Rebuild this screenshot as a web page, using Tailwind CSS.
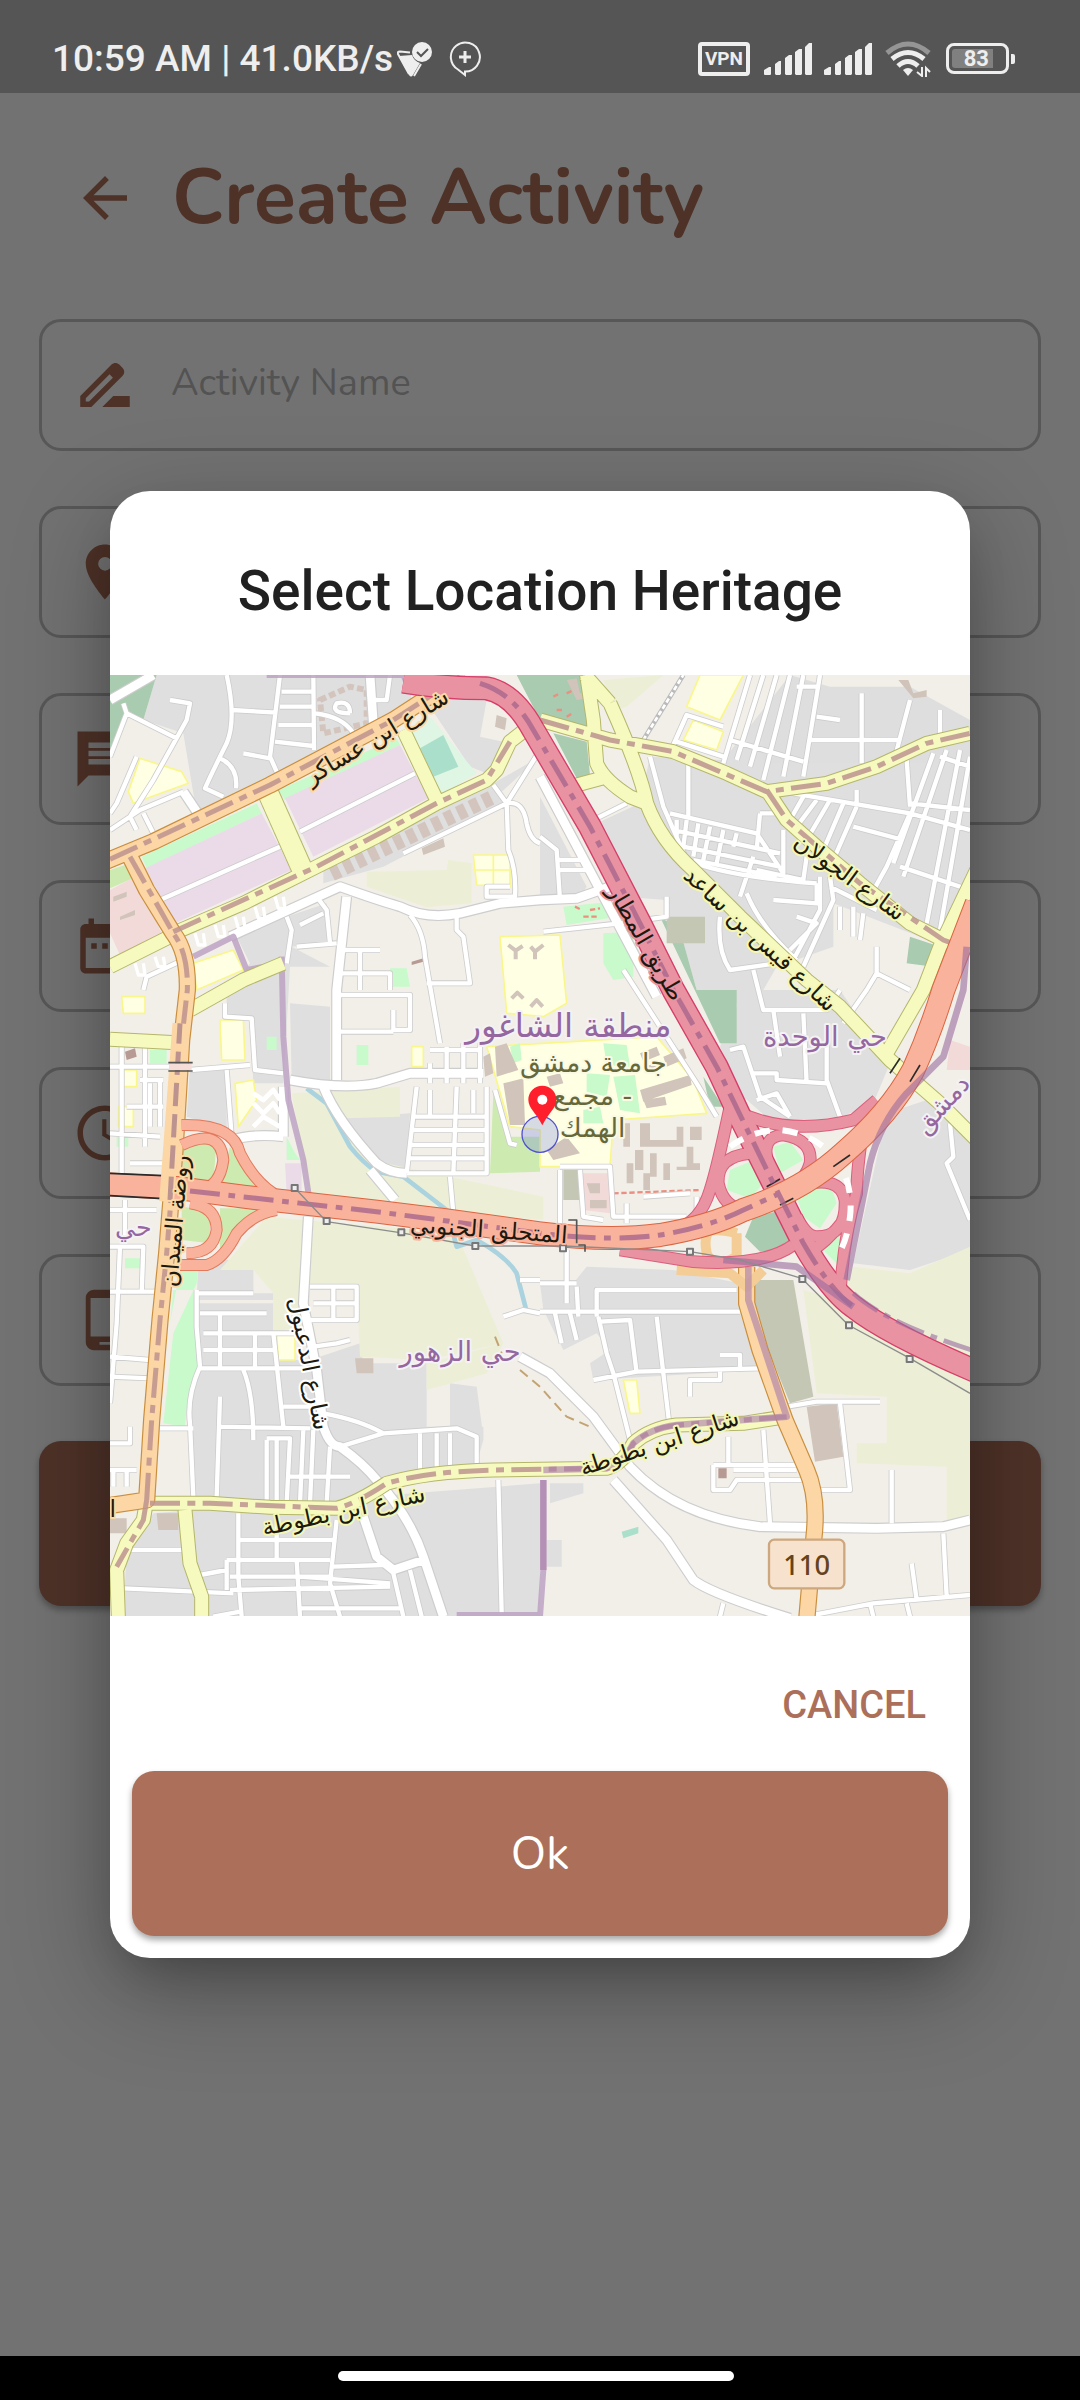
<!DOCTYPE html>
<html lang="en">
<head>
<meta charset="utf-8">
<meta name="viewport" content="width=device-width, initial-scale=1">
<title>Create Activity</title>
<script src="https://cdn.jsdelivr.net/npm/@tailwindcss/browser@4"></script>
</head>
<body class="flex min-h-screen flex-col bg-[#727272] font-['Nunito','Lato',sans-serif] text-[#4e3228]">

<!-- Status bar -->
<header class="flex h-[93px] items-center justify-between bg-[#555] pt-6 pr-[65px] pl-[52px] text-[#eee]">
  <div class="flex items-center">
    <span class="font-['Roboto',sans-serif] text-[37px] leading-[44px] font-medium whitespace-nowrap">10:59 AM | 41.0KB/s</span>
    <svg class="ml-1 h-[36px] w-[36px]" viewBox="0 0 36 36" fill="none" aria-hidden="true">
      <path d="M2 15L15 14Q17 20 23 22L16 34Q14 37 12 34Z" fill="#eee"/>
      <path d="M13 11.500L3 10.500Q0 10.500 1 13L12 33M24 23L17 35" stroke="#eee" stroke-width="2"/>
      <circle cx="25" cy="11" r="10" fill="#eee"/>
      <path d="M20 11l4 4 7-7" stroke="#555" stroke-width="2"/>
    </svg>
    <svg class="ml-4 h-[36px] w-[32px]" viewBox="0 0 32 36" fill="none" stroke="#eee" stroke-width="2" aria-hidden="true">
      <path d="M16 30.500A14.500 14.500 0 1 0 9 28.500L16 34Z"/>
      <path d="M10 16H22M16 10V22" stroke-width="3"/>
    </svg>
  </div>
  <div class="flex items-center">
    <span class="flex h-[34px] w-[52px] items-center justify-center rounded-[4px] border-4 border-[#eee] font-['Roboto',sans-serif] text-[19px] leading-5 font-bold">VPN</span>
    <svg class="ml-[14px] h-[32px] w-[48px]" viewBox="0 0 48 32" fill="#eee" aria-hidden="true"><path id="bars" d="M0 31V27L5 24H7V31Q7 32 6 32H1Q0 32 0 31ZM11 31V21L15 18H17V31L16 32H12ZM21 31V15L25 12H28V31L27 32H22ZM31 31V9L35 6H38V31L37 32H32ZM41 31V4L45 0H48V31L47 32H42Z"/></svg>
    <svg class="ml-[12px] h-[32px] w-[48px]" viewBox="0 0 48 32" fill="#eee" aria-hidden="true"><use href="#bars"/></svg>
    <svg class="ml-[13px] h-[36px] w-[46px]" viewBox="0 0 46 36" fill="none" stroke-width="5" aria-hidden="true">
      <path d="M2 12Q23-6 44 12" stroke="#959595"/>
      <path d="M7 18Q23 5 39 18M13 25Q23 16 33 25" stroke="#eee"/>
      <path d="M18 29Q23 25 28 29L23 35Z" fill="#eee"/>
      <path d="M37 26V35L32 31M41 36V27L45 31" stroke="#eee" stroke-width="2"/>
    </svg>
    <span class="ml-[15px] flex h-[31px] w-[63px] items-center rounded-[8px] border-3 border-[#eee] p-[3px]">
      <span class="flex h-full w-[41px] items-center justify-end rounded-l-[3px] bg-[#808080] pr-1 font-['Roboto',sans-serif] text-[22px] leading-5 font-bold">83</span>
    </span>
    <span class="ml-[2px] h-[10px] w-[4px] rounded-r-[2px] bg-[#eee]"></span>
  </div>
</header>

<main class="relative flex-1">
  <div class="flex h-[210px] items-center gap-[34px] pl-[72px]">
    <button type="button" aria-label="Back" class="h-[66px] w-[66px]">
      <svg viewBox="0 0 24 24" fill="currentColor" aria-hidden="true"><path d="M20 11H7.830l5.590-5.590L12 4l-8 8 8 8 1.410-1.410L7.830 13H20v-2z"/></svg>
    </button>
    <h1 class="text-[77px] leading-[96px] font-bold whitespace-nowrap">Create Activity</h1>
  </div>

  <form class="mt-4 flex flex-col gap-[55px] px-[39px]">
    <label class="flex h-[132px] items-center gap-[33px] rounded-[22px] border-3 border-[#575757] px-[30px]">
      <svg class="h-[66px] w-[66px] shrink-0" viewBox="0 0 24 24" fill="currentColor" aria-hidden="true"><path d="M18.410 5.800L17.200 4.590c-.78-.78-2.050-.78-2.830 0l-2.680 2.680L3 15.960V20h4.040l8.740-8.740 2.630-2.630c.79-.78.79-2.050 0-2.830zM6.210 18H5v-1.210l8.660-8.660 1.210 1.210L6.210 18zM11 20l4-4h6v4H11z"/></svg>
      <input type="text" placeholder="Activity Name" aria-label="Activity Name" class="min-w-0 flex-1 bg-transparent pb-1 text-[38px] leading-[52px] outline-none placeholder:text-[#535353]">
    </label>
    <label class="flex h-[132px] items-center gap-[33px] rounded-[22px] border-3 border-[#575757] px-[30px]">
      <svg class="h-[66px] w-[66px] shrink-0" viewBox="0 0 24 24" fill="currentColor" aria-hidden="true"><path d="M12 2C8.130 2 5 5.130 5 9c0 5.250 7 13 7 13s7-7.750 7-13c0-3.870-3.130-7-7-7zm0 9.500a2.500 2.500 0 010-5 2.500 2.500 0 010 5z"/></svg>
      <input type="text" aria-label="Location" class="min-w-0 flex-1 bg-transparent pb-1 text-[38px] leading-[52px] outline-none">
    </label>
    <label class="flex h-[132px] items-center gap-[33px] rounded-[22px] border-3 border-[#575757] px-[30px]">
      <svg class="h-[66px] w-[66px] shrink-0" viewBox="0 0 24 24" fill="currentColor" aria-hidden="true"><path d="M22 2H2v20l4-4h16V2zM18 14H6v-2h12v2zm0-3H6V9h12v2zm0-3H6V6h12v2z"/></svg>
      <input type="text" aria-label="Description" class="min-w-0 flex-1 bg-transparent pb-1 text-[38px] leading-[52px] outline-none">
    </label>
    <label class="flex h-[132px] items-center gap-[33px] rounded-[22px] border-3 border-[#575757] px-[30px]">
      <svg class="h-[66px] w-[66px] shrink-0" viewBox="0 0 24 24" fill="currentColor" aria-hidden="true"><path d="M9 11H7v2h2v-2zm4 0h-2v2h2v-2zm4 0h-2v2h2v-2zm2-7h-1V2h-2v2H8V2H6v2H5c-1.110 0-1.990.9-1.990 2L3 20c0 1.100.89 2 2 2h14c1.100 0 2-.9 2-2V6c0-1.100-.9-2-2-2zm0 16H5V9h14v11z"/></svg>
      <input type="text" aria-label="Date" class="min-w-0 flex-1 bg-transparent pb-1 text-[38px] leading-[52px] outline-none">
    </label>
    <label class="flex h-[132px] items-center gap-[33px] rounded-[22px] border-3 border-[#575757] px-[30px]">
      <svg class="h-[66px] w-[66px] shrink-0" viewBox="0 0 24 24" fill="currentColor" aria-hidden="true"><path d="M11.990 2C6.470 2 2 6.480 2 12s4.470 10 9.990 10C17.520 22 22 17.520 22 12S17.520 2 11.990 2zM12 20c-4.420 0-8-3.580-8-8s3.580-8 8-8 8 3.580 8 8-3.580 8-8 8zM12.500 7H11v6l5.250 3.150.75-1.230-4.500-2.670z"/></svg>
      <input type="text" aria-label="Time" class="min-w-0 flex-1 bg-transparent pb-1 text-[38px] leading-[52px] outline-none">
    </label>
    <label class="flex h-[132px] items-center gap-[33px] rounded-[22px] border-3 border-[#575757] px-[30px]">
      <svg class="h-[66px] w-[66px] shrink-0" viewBox="0 0 24 24" fill="currentColor" aria-hidden="true"><path d="M16 1H8C6.340 1 5 2.340 5 4v16c0 1.660 1.340 3 3 3h8c1.660 0 3-1.340 3-3V4c0-1.660-1.340-3-3-3zm-2 20h-4v-1h4v1zm3.250-3H6.750V4h10.500v14z"/></svg>
      <input type="tel" aria-label="Phone" class="min-w-0 flex-1 bg-transparent pb-1 text-[38px] leading-[52px] outline-none">
    </label>
    <button type="button" aria-label="Create" class="h-[165px] rounded-[22px] bg-[#4e3228] shadow-[0_4px_6px_rgba(0,0,0,0.3)]"></button>
  </form>

  <!-- Location dialog -->
  <div class="absolute inset-0 flex items-center px-[110px]">
    <section role="dialog" aria-labelledby="dialog-title" class="flex w-full flex-col overflow-hidden rounded-[40px] bg-white shadow-[0_30px_100px_rgba(0,0,0,0.3),0_24px_50px_-18px_rgba(0,0,0,0.25)]">
      <h2 id="dialog-title" class="flex h-[184px] items-center justify-center pt-4 font-['Roboto',sans-serif] text-[55px] leading-[64px] font-medium text-[#212121]">Select Location Heritage</h2>

      <svg class="block w-full" viewBox="0 15 2580 2823" fill="none" role="img" aria-label="Map of Damascus" stroke-linejoin="round">
        <defs>
          <path id="small" d="M40 100L50 130L200 205M180 90L240 100L230 150L130 330L60 440M50 130L0 260M80 260L20 400L0 430M0 480L90 420L220 365M100 430L130 490M60 440L80 480M350 15Q380 150 350 220Q300 320 285 355L340 380M330 265Q385 290 378 355M365 120L500 128M510 15L480 260L500 305M610 15L612 240M510 110H610M505 165H610M495 215L610 228M400 250L480 265M515 65H610M615 130Q700 140 730 190M720 130Q660 130 680 100Q720 90 720 130M840 15L830 90H790M150 690L510 530M570 485L915 310M880 550L1190 400L1290 240M1150 345L1190 400L1195 540Q1220 600 1215 680H1130V650H1200M1190 400Q1240 390 1250 460Q1260 510 1290 520M530 740L545 780L530 880M560 830L680 820M620 680L650 720L660 820M570 765L640 730M700 840H810M750 840V960M690 910H840V960M900 735Q940 780 945 860L990 1120M1040 740V780L1060 800L1080 940H950M100 960L110 920L240 860M345 1000V1040L425 1045L435 1200L520 1210M240 1200L420 1185M350 1200L365 1400M690 975H900V1080H850V1020M690 1085H850M0 1190H180M35 1120V1550M105 1130V1430M0 1390L150 1400M60 1480H160M90 1230H160M120 1240V1370M150 1230V1370M50 1310H160M960 1140H1110M960 1180V1240M1010 1130V1240M1060 1120V1240M1110 1120V1240M920 1250L890 1510M1130 1250V1510H890M1040 1250L1030 1510M960 1260V1340M910 1340H1130M910 1380H1130M905 1425H1130M900 1465H1130M1090 1260V1330M1155 1260L1200 1420L1220 1425M1020 1520L1030 1630M0 1620H140M45 1590V1720M30 1730L20 1960L0 2200M0 1730H100L95 1870M0 1865H140M260 1860V1970L270 2090Q230 2180 240 2260L250 2480M260 1870H430M600 1850H740V1950H600M610 1900H740M670 1850V1950M270 1930H470M330 1930V2090M280 1990H600M280 2040H490M270 2095H600M435 1990V2090M490 1990L520 2270M400 2100Q430 2170 430 2310M330 2180L320 2480M330 2270L600 2275M520 2210H620M610 2030L680 2020L720 2010M470 2310V2500M500 2310V2500M470 2305H540L530 2500M580 2280L570 2500M610 2280L600 2500M660 2330L650 2500M530 2420H720M150 2275H250M0 2060L120 2070M0 2120L120 2125M0 2320H60V2270M0 2400H80M10 2400V2450M50 2400V2450M640 2230Q750 2250 820 2290L690 2330M820 2290L1040 2275L1100 2300V2380M930 2290V2400M980 2290V2400M1020 2290V2400M1165 2430L1175 2830M385 2530V2720L395 2840M500 2550V2670M385 2610H680M680 2550L660 2740L690 2840M350 2670H660M350 2670V2760M560 2670L570 2840M360 2720H670M670 2690L820 2685M570 2720L840 2740M360 2760L840 2750M270 2715L350 2700M850 2710L880 2840M900 2700L935 2840M570 2815H870M310 2840L390 2825M50 2640H220M40 2755L370 2770M1180 1940L1240 1920L1290 1930M1230 1830H1290"/>
          <path id="smalleast" d="M1620 260L1660 410L1730 570Q1850 620 2120 640M1735 280V440M1690 225L1730 135L1840 170M1700 215L1840 260M1920 15L1840 280M1960 15L1880 270M2000 15L1920 290M2040 15L1960 330M2080 15L2020 320M2130 15L2080 320M1860 210L2080 275M2060 50H2130M2120 140L2190 150M2100 210H2370M2255 70V280M2400 90L2350 280M2490 120V200M2390 270L2400 410M1680 430L1940 490M1950 430L1940 540M1950 430H2010M1690 480L2010 550M1720 530L2010 590M1750 570L2000 620M1700 450V500M1730 450L1720 530M1765 460L1750 560M1800 470L1780 570M1840 480L1820 580M1880 490L1870 530M2020 480V610L1940 490M1930 560L1890 680M2090 560L2080 630L1940 600M2050 370L2400 430L2580 480M2080 380L2040 450M2120 390L2060 470M2160 390L2090 510M2200 400L2140 540M2240 410L2170 570M2240 360V400M2400 430L2330 590L2280 680M2230 470L2380 510M2470 250L2350 580M2510 240L2380 620M2550 240L2450 760M2580 260L2490 780M2400 400L2580 420M2490 260L2580 290M2370 590L2580 660M1990 690L2120 700V640M1910 670Q1950 770 2060 870M2060 740L2120 760L2040 840M2160 620L2170 690L2080 890M2130 620V720L2050 870M2160 650L2300 720M2190 710V780M2230 710V800M2260 730L2250 810M2300 830V910L2270 960M2300 910L2400 960M1830 740Q1820 840 1860 900L2000 880M1930 900L1960 1020H2150L2190 960M1990 1020L2010 1160M1860 1140L1900 1130L1950 1280L2040 1340M1930 1210H2000V1230L2150 1240M2080 1030L2090 1240M1940 1290L2000 1270L2040 1340M2150 1120V1230L2190 1340M2270 960L2200 1060M1290 500L1340 540L1350 690M1340 570H1430M1340 600H1440M1300 785L1530 760L1670 740V680M1460 445L1550 400M2520 1360L2530 1460L2510 1480L2580 1650M1540 900L1760 1240L1820 1340M1350 1500V1660M1350 1490H1500L1510 1640H1730M1410 1500L1420 1640L1480 1650M1550 1600V1660M1600 1580L1740 1570M1760 1580V1620M1370 1740V1900M1400 1850L1405 1940M1290 1840H1400M1460 1940V1860H1880M1290 1925H1890M1335 1930L1355 2020M1380 1930L1400 2010M1465 1940L1490 2050L1510 2110L1560 2310M1470 1955L1560 1950L1580 2110M1640 1940L1680 2280M1450 2130L1580 2105L1950 2095M1830 2055H1890V2090M1740 2180V2130H1830V2100M1855 2300V2380M1960 2280L1980 2560M1810 2385H2060M1870 2400H2060M1810 2385V2460H1860L1880 2430H2080M2030 2210L2120 2195H2310M2190 2200L2220 2460H2130M2345 2400V2560M2405 2680L2420 2790M2500 2590L2510 2780M2110 2835L2290 2800L2580 2775M2280 2800L2290 2840M2390 2800L2400 2840M1840 2800L1830 2840"/>
          <path id="wide" d="M0 90L130 15M780 15L790 160M220 365L260 425M360 800L690 650Q800 690 870 710Q950 750 1050 730L1170 700L1290 690L1400 685L1500 650M710 680L680 960V1230M540 1230Q700 1260 800 1240L900 1210H1120M640 1250Q680 1350 800 1480Q840 1510 890 1510M780 1500L855 1590M365 1410Q430 1390 520 1400M520 1250V1400M595 1640L580 1900L620 2100L640 2270Q660 2330 690 2330Q760 2380 800 2430Q900 2540 940 2660L1000 2840M760 2540L800 2660L850 2700L940 2670M1230 2060L1320 2110L1450 2240L1560 2390Q1700 2540 1950 2570L2300 2575L2500 2570L2580 2550M1510 2430L1670 2610L1750 2730Q1800 2770 2040 2845M1290 320L1640 980"/>
          <path id="y1" d="M190 790L400 700L620 590L800 500L980 400L1130 330L1160 300L1200 215L1245 180M880 180L980 390M0 890L180 800M0 1108L200 1118M240 1020L400 930L520 880M120 2500H300L480 2512L680 2515Q740 2500 830 2440Q950 2405 1150 2400L1490 2395Q1540 2380 1570 2320Q1620 2275 1700 2265L1900 2260L2030 2240M110 2490L100 2550L50 2620L20 2700L25 2840M225 2520L240 2680L275 2780V2840M1430 15L1450 150L1460 280Q1480 330 1560 380L1610 400M1400 345L1475 325M1500 100Q1590 300 1610 400Q1650 510 1750 600L1890 740L2090 930L2190 1010L2340 1170L2490 1300L2600 1410M1425 15L1500 100M1290 150L1500 210L1690 245L1850 310L1970 365L2150 340L2300 290L2450 220L2580 190M1970 360L2030 450L2120 530L2250 640L2400 760L2500 810L2580 840M2600 600L2490 830L2440 960L2330 1150"/>
          <path id="o1" d="M-20 577L130 515L480 345L680 240L850 150L950 85L1060 10M60 560L110 660L190 790Q235 850 232 960L215 1110L195 1440L170 1750L150 1950L125 2250L110 2490L-10 2508M1910 1790V1900L1950 2040L2025 2250L2090 2400Q2125 2480 2112 2600L2090 2850"/>
          <path id="t1" d="M880 35Q1000 55 1130 55Q1210 70 1270 180L1440 470L1590 760L1690 960L1820 1190L1890 1340L1990 1540L2080 1720Q2160 1860 2230 1910Q2330 1990 2600 2105"/>
          <path id="ramps" d="M1860 1310Q1820 1500 1800 1560Q1770 1660 1690 1680M1870 1320Q2030 1400 2230 1350L2300 1290M2260 1370Q2240 1500 2240 1570Q2200 1700 2190 1880M1530 1740L1750 1775Q1960 1790 2050 1725M1920 1450Q1820 1460 1825 1540Q1840 1610 1900 1620M1975 1480Q1950 1400 2020 1395Q2110 1410 2100 1480Q2090 1520 2050 1550M2060 1550Q2190 1510 2205 1590Q2210 1700 2120 1700Q2090 1700 2060 1640M2080 1760Q2150 1720 2210 1640"/>
          <path id="m1" d="M-10 1543L210 1555L400 1580L800 1625L1000 1650L1290 1690Q1500 1715 1650 1695Q1800 1670 1900 1620Q2080 1560 2200 1450Q2340 1330 2410 1200Q2460 1090 2500 960L2600 700"/>
          <path id="r1" d="M215 1365Q370 1360 390 1450Q430 1530 490 1570M215 1425Q330 1370 340 1470Q330 1550 270 1560M210 1785H290Q340 1770 380 1690Q430 1630 500 1620M240 1600Q320 1610 320 1680Q310 1750 230 1750"/>
        </defs>

        <rect y="15" width="2580" height="2823" fill="#f2efe9"/>

        <!-- land use -->
        <g fill="#dfdfdf">
          <path d="M140 15H900L905 100L450 350L260 430L220 190L100 150Z"/>
          <path d="M960 110L1060 75L1130 90L1110 200L1200 220L1130 310L1080 290ZM1290 260L1170 370L1150 340Z"/>
          <path d="M640 600L1150 340L1190 400L820 590L640 640ZM380 800L530 740L650 700V820L545 830L660 890H540L520 1240L430 1240L420 1050L350 1030V960L420 880ZM540 1000L660 1010V1230H545Z"/>
          <path d="M240 1190H350V1380L230 1340ZM700 1345L900 1330L890 1500L800 1480ZM265 1770H430V1870H490V1890H260ZM260 1900H490V2070H600L750 2020L760 2080H950V2270H1120V2310L1100 2380L830 2430L680 2500H250L240 2200Z"/>
          <path d="M1020 2140L1100 2150L1120 2300H1020ZM130 2530L1290 2440V2840H40L50 2640ZM1320 2440H1420V2470L1320 2500Z"/>
          <path d="M1290 380L1430 650L1400 700H1290ZM1620 260L1840 270L2040 15L2160 50H2400L2580 150V640L2480 820L2170 700V830L2000 890L1960 960V1020L1900 1100L1870 960H1760L1710 780H1670V690L1540 680L1460 460L1590 400Z"/>
          <path d="M1830 1130L1900 960H2190L2340 1180L2290 1300L2150 1360L1990 1360L1900 1280ZM2330 1330L2480 1280L2580 1400V1740L2400 1800L2230 1780ZM1290 1840H1390L1430 1790L1690 1800L1890 1840V1930L1950 2100L1450 2130L1440 2080L1500 2040L1460 1990L1360 2040L1300 1920ZM1310 2610H1355V2690H1310Z"/>
        </g>
        <g fill="#ecefd6">
          <path d="M770 605L1010 600L1015 570L1085 580V700L950 712L770 650ZM545 1270L870 1250V1340L700 1345L780 1470L1300 1580V1650L600 1590ZM470 1640L1040 1690L1180 2020L950 2070L750 2060L740 1850H600V1960L490 1990V1870L430 1800H330Z"/>
          <path d="M1480 30L1660 15L1550 110L1510 120ZM2230 1790L2400 1810L2580 1730V2550L2510 2550V2390L2240 2380V2320H2330V2180L2120 2170L2080 1860L2190 1890ZM950 2080L1180 2020L1130 2110L950 2160Z"/>
        </g>
        <path d="M0 15H140L100 150L50 120L0 250ZM1220 15H1420L1440 170L1290 150ZM1330 190L1430 215L1440 315L1400 325ZM1650 740L1710 780L1760 960L1880 960V1120H1830ZM1780 1220L1840 1310H1800ZM2400 800L2490 830L2470 890L2390 880ZM1930 1640L2020 1620L2050 1700Q2030 1750 1950 1745L1905 1700Z" fill="#a9cbaf"/>
        <path d="M0 600L60 580L80 620L0 655ZM215 1410L320 1410L310 1540L220 1530ZM360 1430L450 1550L330 1540ZM330 1615H440L330 1740ZM215 1610L300 1620V1720L215 1710ZM1150 1270L1140 1510L1290 1505V1400H1190Z" fill="#cdebb0"/>
        <path d="M95 560L440 400L455 430L110 595ZM505 360L860 205L870 225L525 390ZM1480 790L1570 785V920L1510 930L1480 880ZM1360 710L1500 695L1520 740L1370 765ZM740 1125H775V1185H740ZM470 1100H500V1140H470ZM530 1400L555 1450L570 1470H530ZM120 1140H170V1180H120ZM840 895H890L900 950H845ZM215 1770H265L260 1840L190 1990L160 2260L225 2270Q230 2180 265 2080L250 1860H190L180 1960ZM20 1400H55V1430H20ZM45 1765H90V1795H45ZM1860 1500L1920 1475L1960 1540L1920 1585L1850 1560ZM1990 1430L2040 1415L2080 1470L2010 1510ZM2060 1580L2160 1540L2180 1600L2130 1675L2080 1640ZM2130 1730L2190 1680V1790Z" fill="#c8facc"/>
        <path d="M105 595L455 430L545 600L195 760ZM525 385L870 225L955 385L610 560ZM525 1480H575V1570H530Z" fill="#ebdbe8"/>
        <path d="M0 660L75 620L155 790L30 855L0 790ZM2520 1110L2580 1130V1200H2510ZM1410 1510H1500V1630L1420 1620Z" fill="#f2dad9"/>
        <path d="M900 190L960 140L1100 310L990 375Z" fill="#def6e3"/>
        <path d="M930 235L1000 195L1045 290L970 320ZM1535 2585L1585 2570V2590L1540 2605Z" fill="#aae0cb"/>
        <g fill="#ffffe3" stroke="#f9f78c" stroke-width="5">
          <path d="M90 265L215 305L235 340L70 400L55 365ZM1090 555H1200V650L1100 645ZM1170 800L1350 795L1370 1000L1300 1040L1190 1030ZM250 880L370 840L400 900L260 960ZM330 1050H400L405 1170H335ZM35 980H105V1030H40ZM375 1240L430 1230L440 1290L385 1370ZM905 1130H940V1190H905ZM35 1200H80V1250H35ZM25 1310H70V1370H25ZM500 1995H555V2070H505ZM1720 210L1750 150L1840 185L1820 240ZM1770 15L1730 110L1830 150L1900 15ZM1540 2130H1580L1590 2230H1560Z"/>
          <path d="M1130 1130L1640 1100L1750 1230L1790 1330L1510 1350L1500 1490H1290V1380L1200 1370Z"/>
        </g>
        <path d="M1090 600H1200M1150 555V650" stroke="#f9f78c" stroke-width="5"/>
        <path d="M1480 1120L1550 1125L1560 1190L1490 1185ZM1510 1220L1575 1215L1590 1330L1530 1320ZM1430 1210L1500 1215L1490 1280L1430 1265ZM1420 1320L1470 1310L1480 1360H1420ZM1200 1130L1230 1120L1235 1170L1210 1180Z" fill="#c8facc"/>
        <path d="M1510 1350H1790L1780 1560L1510 1580Z" fill="#f2efe9"/>
        <g fill="#d1c4ba">
          <path d="M1155 1130L1190 1120L1225 1200L1160 1220ZM1180 1240L1240 1225L1245 1365L1200 1365ZM1120 1160L1140 1150L1150 1210L1125 1220ZM1160 135L1190 145L1185 180L1155 170ZM935 535L1000 505L1005 530L940 555ZM10 680L50 665V680L10 695ZM30 740L75 720V735L30 750ZM1590 1260L1740 1215L1745 1245L1600 1295ZM1600 1290L1665 1280L1670 1305L1610 1315ZM1590 1150L1640 1130L1650 1155L1600 1175ZM1660 1160L1720 1135L1730 1165L1670 1190ZM1600 1190L1640 1180L1645 1200L1605 1210ZM1310 1220L1350 1210L1360 1240L1320 1250ZM1370 30L1400 25L1410 70L1450 65L1455 80L1400 90ZM735 2065H790V2110H740ZM140 2530H205V2580H145ZM0 2545H50V2590H0Z"/>
          <path d="M1590 1360H1620V1410H1700V1370H1720V1430H1590ZM1740 1370H1775V1410H1740ZM1540 1360H1560V1430H1540ZM1575 1440H1600V1500H1575ZM1620 1450H1640V1520H1620ZM1550 1480H1570V1540H1550ZM1730 1430H1750V1480H1770V1500H1700V1490H1730ZM1660 1480H1680V1530H1660ZM1600 1510H1620V1560H1600ZM2090 2210L2180 2200L2200 2360L2115 2375ZM1310 1440L1370 1400L1410 1450L1330 1470ZM1430 1540H1470V1570H1440ZM1440 1590H1490V1615H1440ZM2365 30H2395L2410 70L2450 60V80L2410 85Z"/>
        </g>
        <path d="M1195 825L1217 842L1238 828M1217 842V868M1300 825L1275 845L1262 830M1275 845V868M1205 985L1222 968L1240 985M1262 1010L1280 990L1298 1010" stroke="#d1c4ba" stroke-width="12"/>
        <path d="M665 612L1155 378" stroke="#d3c5bd" stroke-width="44" stroke-dasharray="26 16"/>
        <path d="M630 90L720 50L770 60V160L640 190Z" stroke="#d3c5bd" stroke-width="18" stroke-dasharray="20 10"/>
        <path d="M1670 740H1785V820H1670ZM1890 1830H2050L2110 2180L2040 2200ZM1360 1500H1410V1590H1360Z" fill="#c5c7b5"/>
        <path d="M45 1145L75 1135L80 1160L50 1170ZM1825 2395H1850V2425H1825ZM905 875L940 865V875L905 885Z" fill="#b89a94"/>
        <path d="M1330 80l20-10M1340 120h20M1370 140l20-12M1370 70l20-10M1395 710l20 10M1440 720l30-5M1420 740h40M1510 1570L1770 1560M2380 460l20-10" stroke="#ec8f80" stroke-width="7" stroke-dasharray="16 8"/>
        <path d="M590 1255L650 1300L720 1430Q760 1480 800 1505L880 1520L1010 1620L1040 1730L1100 1710Q1190 1760 1220 1810L1250 1925" stroke="#aad3df" stroke-width="14"/>

        <!-- minor streets -->
        <g stroke="#cdcdcd">
          <use href="#small" stroke-width="18"/>
          <use href="#smalleast" stroke-width="18"/>
          <use href="#wide" stroke-width="33"/>
        </g>
        <g stroke="#fff">
          <use href="#small" stroke-width="13"/>
          <use href="#smalleast" stroke-width="13"/>
          <use href="#wide" stroke-width="26"/>
        </g>
        <path d="M430 1270L460 1290L490 1260L510 1290M430 1300L460 1330L490 1300L510 1330M430 1370L460 1340L510 1370" stroke="#fff" stroke-width="14"/>
        <path d="M255 790l10 35h20l-5-35M315 765l10 35h20l-5-35M375 740l10 35h20l-5-35M435 710l10 35h20l-5-35M495 680l10 35h20l-5-35M75 880l10 35h20l-5-35M135 860l10 30h20l-5-30" stroke="#fff" stroke-width="10"/>
        <path d="M1600 210L1720 15" stroke="#bbb" stroke-width="14"/>
        <path d="M1600 210L1720 15" stroke="#fff" stroke-width="8" stroke-dasharray="14 8"/>
        <path d="M1155 2000L1175 2050M1230 2100L1290 2150L1370 2240L1440 2270" stroke="#c4a373" stroke-width="6" stroke-dasharray="30 18"/>
        <path d="M515 860L520 1100L535 1290L580 1470L600 1600M250 860L370 800L410 900L520 880M470 15H880L900 60M1300 2430V2700L1290 2840M1040 2835H1290" stroke="#bda2c3" stroke-width="18" opacity=".85"/>

        <!-- yellow roads -->
        <use href="#y1" stroke="#b4b66a" stroke-width="45"/>
        <path d="M475 370L575 595" stroke="#b4b66a" stroke-width="66"/>
        <use href="#y1" stroke="#f7fabf" stroke-width="39"/>
        <path d="M475 370L575 595" stroke="#f7fabf" stroke-width="60"/>
        <!-- orange roads -->
        <use href="#o1" stroke="#c98e3e" stroke-width="52"/>
        <use href="#o1" stroke="#fcd6a4" stroke-width="45"/>
        <path d="M1880 1690V1760Q1810 1800 1790 1750Q1780 1700 1800 1680Q1850 1680 1880 1690M1700 1800L1860 1810L1910 1850L1960 1800" stroke="#f4cc95" stroke-width="30"/>
        <g stroke="#bd938f" stroke-width="15" stroke-dasharray="90 22 24 22" opacity=".85">
          <path d="M0 568L480 345L850 150L1050 20M60 560L190 790Q235 850 232 960L215 1110L195 1440L170 1750L150 1950L125 2250L110 2490M190 785L620 590L980 400L1130 330L1200 215M120 2500H300L680 2515Q740 2500 830 2440Q950 2405 1150 2400L1490 2395Q1540 2380 1570 2320Q1620 2275 1700 2265L2030 2240M110 2490L100 2550L20 2690"/>
          <path d="M1290 150L1500 210L1690 245L1970 365L2150 340L2300 290L2450 220L2580 190M1970 360L2030 450L2250 640L2500 810L2580 840"/>
        </g>
        <path d="M1300 2400L1490 2395Q1540 2380 1570 2320Q1620 2275 1700 2265L2030 2240L1915 1890V1790M1300 2430V2700" stroke="#a97cab" stroke-width="20" opacity=".6"/>

        <!-- motorway and interchanges -->
        <use href="#r1" stroke="#e2795c" stroke-width="36"/>
        <use href="#ramps" stroke="#dc5e7c" stroke-width="38"/>
        <use href="#t1" stroke="#d63d68" stroke-width="72"/>
        <use href="#ramps" stroke="#e892a2" stroke-width="32"/>
        <use href="#t1" stroke="#e892a2" stroke-width="64"/>
        <path d="M1860 1430Q1930 1380 2010 1380Q2120 1390 2190 1480Q2230 1560 2220 1640Q2210 1720 2180 1760" stroke="#fff" stroke-width="18" stroke-dasharray="46 38"/>
        <use href="#m1" stroke="#dc6440" stroke-width="72"/>
        <use href="#r1" stroke="#f9b29c" stroke-width="30"/>
        <use href="#m1" stroke="#f9b29c" stroke-width="66"/>
        <path d="M0 1510L160 1517M0 1577L160 1586M1970 1550L2010 1527M2170 1490L2220 1455M2010 1605L2050 1585M2340 1210L2370 1165M2400 1235L2430 1185" stroke="#2b2b2b" stroke-width="5"/>
        <path d="M170 1595L210 1060" stroke="#fcd6a4" stroke-width="45"/>
        <path d="M180 1590L210 1060" stroke="#bd938f" stroke-width="15" stroke-dasharray="70 24"/>
        <g stroke="#a8668c" stroke-width="15" stroke-dasharray="90 26 20 26" opacity=".8">
          <path d="M240 1563L800 1625L1290 1690Q1500 1715 1650 1695Q1800 1670 1900 1620L2010 1570"/>
          <path d="M1110 40Q1210 70 1270 180L1440 470L1590 760L1690 960L1820 1190L1990 1540L2080 1720Q2160 1860 2230 1910"/>
        </g>
        <path d="M2570 830L2560 960L2500 1160L2390 1270Q2310 1360 2280 1480L2210 1830M1840 1770Q1960 1780 2060 1790L2230 1910" stroke="#9a6a9e" stroke-width="20" opacity=".6"/>
        <path d="M2230 1870Q2330 1960 2600 2045" stroke="#9a6a9e" stroke-width="14" opacity=".6" stroke-dasharray="90 22 20 22"/>
        <path d="M555 1555L650 1655L870 1688L1095 1728H1360L1740 1745L1890 1770L2075 1825L2215 1965L2400 2065L2580 2170" stroke="#8c8c8c" stroke-width="4"/>
        <g fill="#eee" stroke="#777" stroke-width="6">
          <path d="M545 1545h18v18h-18ZM641 1644h18v18h-18ZM865 1678h18v18h-18ZM1087 1719h18v18h-18ZM1350 1726h18v18h-18ZM1731 1736h18v18h-18ZM2068 1818h18v18h-18ZM2208 1957h18v18h-18ZM2390 2058h18v18h-18Z"/>
        </g>
        <path d="M178 1190H245" stroke="#f6ddd8" stroke-width="20"/>
        <path d="M175 1178H248M175 1203H248M1375 1650H1400V1720M1405 1725H1425V1745" stroke="#555" stroke-width="5"/>

        <rect x="1977" y="2609" width="226" height="146" rx="16" fill="#f7e3cd" stroke="#cda77e" stroke-width="7"/>
        <text x="2090" y="2716" text-anchor="middle" font-family="Noto Sans, sans-serif" font-size="82" font-weight="500" fill="#654321">110</text>

        <!-- labels -->
        <g font-family="DejaVu Sans, sans-serif" text-anchor="middle" paint-order="stroke" stroke-width="12" direction="rtl" font-size="70">
          <g fill="#1c1a10" stroke="#fbd9a4">
            <text transform="translate(812 220) rotate(-31)">شارع ابن عساكر</text>
            <text transform="translate(218 1655) rotate(-85)">روضة الميدان</text>
            <text x="8" y="2540">ا</text>
          </g>
          <g fill="#1c1a10" stroke="#f4f7b4">
            <text transform="translate(2205 640) rotate(36)">شارع الجولان</text>
            <text transform="translate(1935 825) rotate(43)">شارع قيس بن ساعد</text>
            <text transform="translate(705 2545) rotate(-12)">شارع ابن بطوطة</text>
            <text transform="translate(1655 2340) rotate(-18)">شارع ابن بطوطة</text>
          </g>
          <text transform="translate(1588 830) rotate(60)" fill="#1c1a10" stroke="#e892a2">طريق المطار</text>
          <text transform="translate(1135 1703) rotate(4)" fill="#1c1a10" stroke="#f9b29c">المتحلق الجنوبي</text>
          <text transform="translate(575 2085) rotate(79)" fill="#1c1a10" stroke="#fff">شارع الدعبول</text>
          <g fill="#9467a0" stroke="#f5f2f4">
            <text x="1375" y="1102" font-size="98">منطقة الشاغور</text>
            <text x="2145" y="1128" font-size="82">حي الوحدة</text>
            <text x="1050" y="2072" font-size="82">حي الزهور</text>
            <text x="70" y="1698" font-size="76">حي</text>
            <text transform="translate(2515 1320) rotate(-48)" font-size="76">دمشق</text>
          </g>
          <g fill="#67683a" stroke="#fafae4" font-size="80">
            <text x="1450" y="1205">جامعة دمشق</text>
            <text x="1448" y="1305">- مجمع</text>
            <text x="1448" y="1402">الهمك</text>
          </g>
        </g>

        <!-- selected place -->
        <circle cx="1290" cy="1393" r="54" fill="#5a6be0" fill-opacity=".25" stroke="#5050d0" stroke-width="4"/>
        <path d="M1297 1366C1280 1330 1255 1315 1255 1289A42 42 0 0 1 1339 1289C1339 1315 1314 1330 1297 1366Z" fill="#fe1e2c"/>
        <circle cx="1297" cy="1289" r="15" fill="#fff"/>
      </svg>

      <div class="flex justify-end px-[44px] pt-[63px] pb-[40px]">
        <button type="button" class="h-[52px] font-['Roboto',sans-serif] text-[38px] leading-[52px] font-medium text-[#ab6f5a]">CANCEL</button>
      </div>
      <div class="px-[22px] pb-[22px]">
        <button type="button" class="h-[165px] w-full rounded-[22px] bg-[#ab6f5a] text-[46px] leading-[60px] text-white shadow-[0_4px_6px_rgba(0,0,0,0.35)]">Ok</button>
      </div>
    </section>
  </div>
</main>

<!-- Gesture bar -->
<footer class="flex h-[44px] items-center justify-center bg-black pr-2 pb-1">
  <div class="h-[10px] w-[37%] rounded-full bg-white"></div>
</footer>
</body>
</html>
